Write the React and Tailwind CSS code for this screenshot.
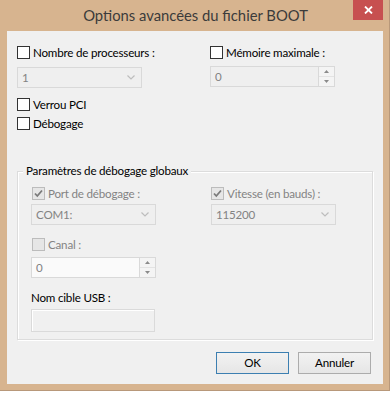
import React from "react";

const font = { fontFamily: 'Lato, "Noto Sans", sans-serif' };
const T = "text-[11.6px] tracking-[-0.2px]";

function Box({ checked = false, disabled = false }) {
  return (
    <span
      className={
        "inline-flex items-center justify-center w-[13px] h-[13px] shrink-0 border " +
        (disabled ? "border-[#bcbcbc] bg-[#e6e6e6]" : "border-[#333333] bg-white")
      }
    >
      {checked && (
        <svg width="11" height="11" viewBox="0 0 11 11">
          <path d="M2 5.5 L4.3 8 L9 2.5" fill="none" stroke="#7a7a7a" strokeWidth="1.8" />
        </svg>
      )}
    </span>
  );
}

function Check({ label, checked, disabled }) {
  return (
    <div className="flex items-center h-[13px]">
      <Box checked={checked} disabled={disabled} />
      <span className={"ml-[3px] leading-none whitespace-nowrap " + T + " " + (disabled ? "text-[#838383]" : "text-black")}>
        {label}
      </span>
    </div>
  );
}

function Chevron() {
  return (
    <svg width="8" height="5" viewBox="0 0 8 5">
      <path d="M0.5 0.5 L4 4 L7.5 0.5" fill="none" stroke="#bdbdbd" strokeWidth="1.2" />
    </svg>
  );
}

function Select({ value, w = "w-[125px]" }) {
  return (
    <div className={"flex items-center h-[21px] border border-[#d9d9d9] bg-[#efefef] pl-[4px] pr-[6px] " + w}>
      <span className={"flex-1 leading-none text-[#838383] " + T}>{value}</span>
      <Chevron />
    </div>
  );
}

function Spin({ value, bg = "bg-[#efefef]" }) {
  return (
    <div className={"flex items-stretch h-[21px] w-[125px] border border-[#d9d9d9] " + bg}>
      <span className={"flex-1 flex items-center pl-[4px] leading-none text-[#838383] " + T}>{value}</span>
      <div className="w-[16px] flex flex-col border-l border-[#d9d9d9] bg-[#f4f4f4]">
        <div className="flex-1 flex items-center justify-center border-b border-[#e3e3e3]">
          <svg width="5" height="3" viewBox="0 0 5 3"><path d="M0 3 L2.5 0 L5 3 Z" fill="#8a8a8a" /></svg>
        </div>
        <div className="flex-1 flex items-center justify-center">
          <svg width="5" height="3" viewBox="0 0 5 3"><path d="M0 0 L2.5 3 L5 0 Z" fill="#8a8a8a" /></svg>
        </div>
      </div>
    </div>
  );
}

export default function App() {
  return (
    <div className="w-[392px] h-[395px] bg-white overflow-hidden" style={font}>
      <div className="relative w-[390px] h-[391px] bg-[#d7b48f] border-b border-r border-[#b8987a]">
        {/* title bar */}
        <div className="h-[31px] flex items-center justify-center">
          <span className="text-[14.8px] text-[#3b3b3b] leading-none mt-[-1px] pl-[2px]">Options avancées du fichier BOOT</span>
        </div>
        <div className="absolute top-0 left-[353px] w-[30px] h-[20px] bg-[#c75050] flex items-center justify-center">
          <svg width="9" height="8" viewBox="0 0 9 8">
            <path d="M1 0.5 L8 7.5 M8 0.5 L1 7.5" stroke="white" strokeWidth="1.8" />
          </svg>
        </div>
        {/* client */}
        <div className="ml-[7px] w-[376px] h-[353px] bg-[#f0f0f0] flex flex-col px-[10px] pt-[15px]">
          <div className="flex">
            <div className="w-[193px] flex flex-col">
              <Check label="Nombre de processeurs :" />
              <div className="mt-[8px]"><Select value="1" /></div>
              <div className="mt-[10px]"><Check label="Verrou PCI" /></div>
              <div className="mt-[6px]"><Check label="Débogage" /></div>
            </div>
            <div className="flex flex-col">
              <Check label="Mémoire maximale :" />
              <div className="mt-[7px]"><Spin value="0" /></div>
            </div>
          </div>
          {/* group */}
          <div className="relative mt-[41px] w-[356px] h-[169px] border border-[#dcdcdc] shadow-[inset_1px_1px_0_#ffffff,1px_1px_0_#ffffff] pl-[13px] pt-[15px]">
            <span className={"absolute left-[5px] top-[-8px] px-[3px] bg-[#f0f0f0] leading-[14px] text-black whitespace-nowrap " + T}>
              Paramètres de débogage globaux
            </span>
            <div className="flex">
              <div className="w-[180px] flex flex-col">
                <div className="pl-[1px]"><Check label="Port de débogage :" checked disabled /></div>
                <div className="mt-[4px]"><Select value="COM1:" /></div>
                <div className="mt-[13px] pl-[1px]"><Check label="Canal :" disabled /></div>
                <div className="mt-[6px]"><Spin value="0" bg="bg-[#fafafa]" /></div>
                <div className={"mt-[13px] leading-[14px] text-black " + T}>Nom cible USB :</div>
                <div className="mt-[4px] w-[124px] h-[23px] border border-[#dadada] bg-[#f0f0f0] shadow-[inset_1px_1px_0_#ffffff]" />
              </div>
              <div className="flex flex-col">
                <Check label="Vitesse (en bauds) :" checked disabled />
                <div className="mt-[4px]"><Select value="115200" /></div>
              </div>
            </div>
          </div>
          {/* buttons */}
          <div className="flex justify-end gap-[9px] mt-[12px] pr-[2px]">
            <div className={"w-[73px] h-[22px] border border-[#3c7fb1] bg-gradient-to-b from-[#f2f2f2] to-[#e6e6e6] flex items-center justify-center text-black leading-none " + T}>
              OK
            </div>
            <div className={"w-[73px] h-[22px] border border-[#acacac] bg-gradient-to-b from-[#f2f2f2] to-[#e6e6e6] flex items-center justify-center text-black leading-none " + T}>
              Annuler
            </div>
          </div>
        </div>
      </div>
    </div>
  );
}
